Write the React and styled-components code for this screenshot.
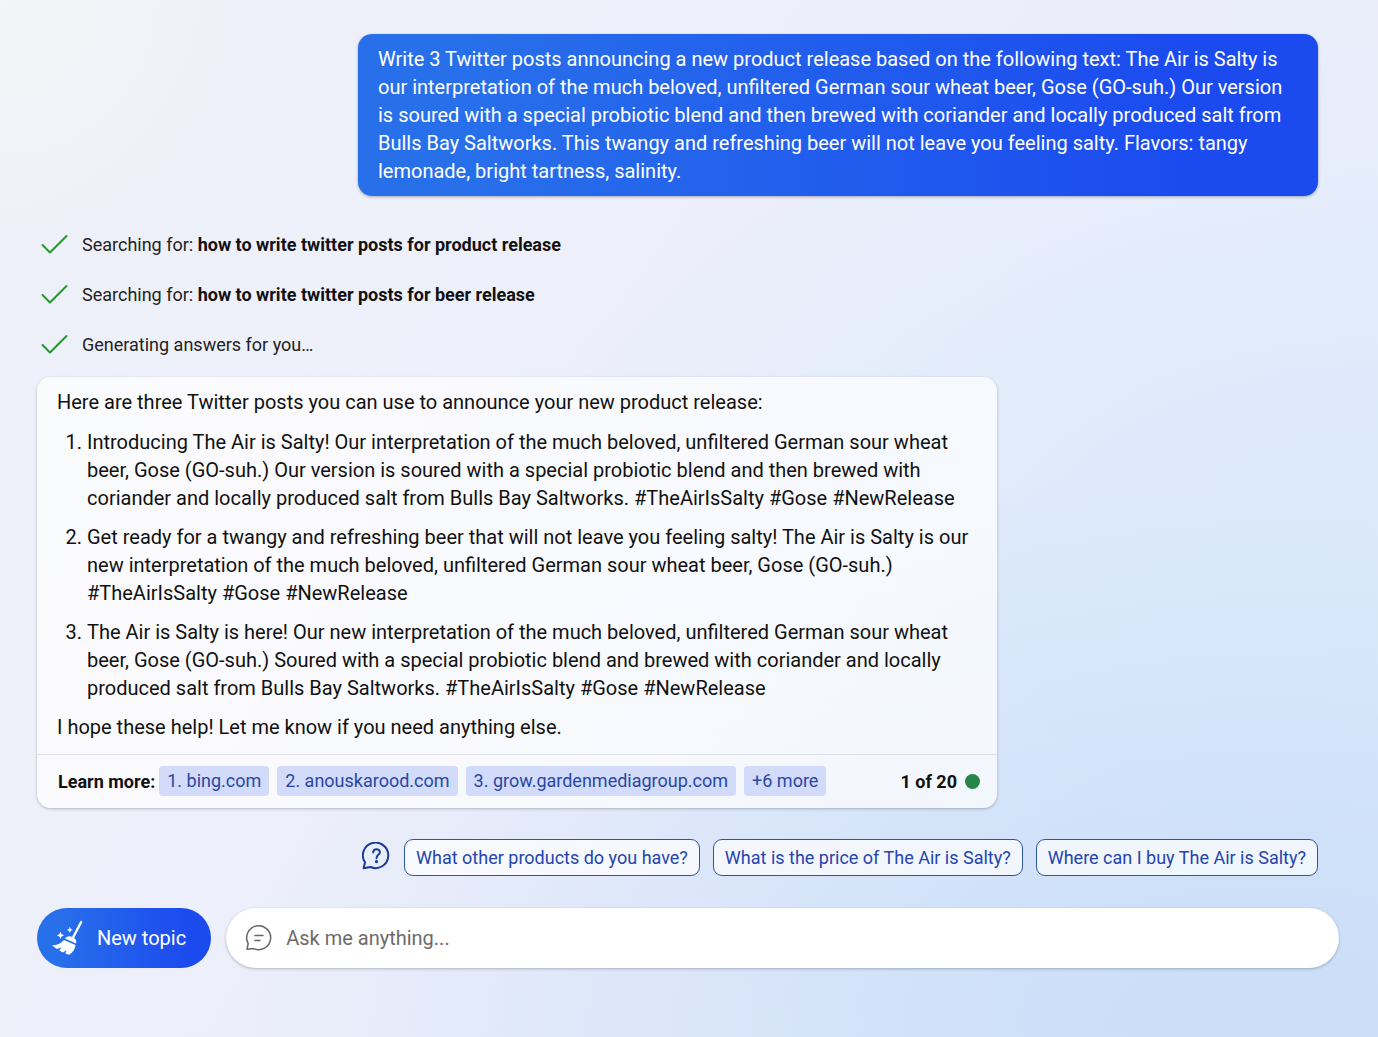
import React, { useState } from 'react'
import styled, { createGlobalStyle } from 'styled-components'

const GlobalStyle = createGlobalStyle`
  * {
    box-sizing: border-box;
  }
  body {
    margin: 0;
    font-family: Roboto, "Liberation Sans", sans-serif;
    color: #111;
  }
  button, input {
    font-family: inherit;
  }
`;

const Page = styled.div`
  min-height: 100vh;
  padding: 34px 39px 40px 37px;
  background:
    radial-gradient(circle at 0% 0%, #f3f5f7 0%, rgba(243, 245, 247, 0) 14%),
    radial-gradient(ellipse 75% 55% at 92% 100%, #cadef8 0%, rgba(202, 222, 248, 0.85) 25%, rgba(202, 222, 248, 0) 100%),
    radial-gradient(ellipse 65% 55% at 100% 58%, #ddeafb 0%, rgba(221, 234, 251, 0.9) 40%, rgba(221, 234, 251, 0) 100%),
    linear-gradient(120deg, #eff1f9 0%, #edeffa 35%, #e8ecfa 100%);
`;

const Thread = styled.main`
  display: flex;
  flex-direction: column;
  padding-right: 21px;
`;

const UserMessage = styled.div`
  align-self: flex-end;
  max-width: 960px;
  padding: 11px 20px;
  border-radius: 14px;
  background: linear-gradient(90deg, #2870ea 10%, #1b4aef 88%);
  color: white;
  font-size: 20px;
  line-height: 28px;
  box-shadow: 0 1px 3px rgba(0, 0, 0, 0.3);
`;

const StatusList = styled.ul`
  list-style: none;
  margin: 23px 0 8px;
  padding: 0 0 0 4px;
`;

const Status = styled.li`
  display: flex;
  align-items: center;
  gap: 14px;
  height: 50px;
  font-size: 18px;
  color: #222;
  b {
    color: #111;
  }
`;

const Answer = styled.article`
  width: 100%;
  max-width: 960px;
  border-radius: 14px;
  background-color: rgba(255, 255, 255, 0.7);
  box-shadow: 0 1px 3px rgba(0, 0, 0, 0.25);
`;

const AnswerBody = styled.div`
  padding: 11px 20px 13px;
  font-size: 20px;
  line-height: 28px;
  p {
    margin: 0;
  }
  ol {
    margin: 12px 0 11px;
    padding-left: 30px;
  }
  li + li {
    margin-top: 11px;
  }
`;

const AnswerFooter = styled.footer`
  display: flex;
  align-items: center;
  flex-wrap: wrap;
  gap: 8px;
  padding: 11px 17px 12px 21px;
  border-top: 1px solid #dfe1ea;
  font-size: 18px;
`;

const Label = styled.span`
  font-weight: 700;
  margin-right: -4px;
`;

const Source = styled.a`
  padding: 0 8px;
  border-radius: 4px;
  background-color: #d2dbf9;
  color: #2a47a5;
  line-height: 30px;
  text-decoration: none;
  &:hover{
    text-decoration: underline;
  }
`;

const Counter = styled.span`
  display: flex;
  align-items: center;
  gap: 8px;
  margin-left: auto;
  font-weight: 700;
  &::after {
    content: "";
    width: 15px;
    height: 15px;
    border-radius: 50%;
    background-color: #27854a;
  }
`;

const Suggestions = styled.div`
  display: flex;
  align-items: center;
  justify-content: flex-end;
  flex-wrap: wrap;
  gap: 13px;
  margin-top: 31px;
`;

const Suggestion = styled.button`
  height: 37px;
  padding: 0 11px;
  border: 1px solid #2b56a8;
  border-radius: 9px;
  background-color: rgba(255, 255, 255, 0.7);
  color: #2444ae;
  font-size: 18px;
  cursor: pointer;
`;

const Composer = styled.form`
  display: flex;
  align-items: center;
  gap: 15px;
  margin-top: 32px;
`;

const NewTopic = styled.button`
  display: flex;
  align-items: center;
  gap: 13px;
  height: 60px;
  padding: 0 25px 0 14px;
  border: none;
  border-radius: 30px;
  background: linear-gradient(90deg, #2870ea 10%, #1b4aef 88%);
  color: white;
  font-size: 20px;
  white-space: nowrap;
  cursor: pointer;
`;

const InputBar = styled.label`
  flex: 1;
  display: flex;
  align-items: center;
  gap: 13px;
  height: 60px;
  padding: 0 24px 0 19px;
  border-radius: 30px;
  background-color: white;
  color: #666;
  box-shadow: 0 1px 3px rgba(0, 0, 0, 0.25);
`;

const Input = styled.input`
  flex: 1;
  min-width: 0;
  padding: 0;
  border: none;
  outline: none;
  background: none;
  color: #111;
  font-size: 20px;
  &::placeholder {
    color: #6b6b6b;
    opacity: 1;
  }
`;

const CheckIcon = () => (
    <svg width="27" height="20" viewBox="0 0 27 20" fill="none" stroke="#219a2b" strokeWidth="2" aria-hidden="true">
        <path d="M1.5 11L9 18.5L25.5 2" strokeLinecap="round" strokeLinejoin="round" />
    </svg>
)

const QuestionIcon = () => (
    <svg width="29" height="32" viewBox="0 0 29 32" fill="none" stroke="#1c3c94" strokeWidth="2" strokeLinecap="round" strokeLinejoin="round" aria-hidden="true">
        <path d="M1.6 26.2L3 20.4A12.7 12.7 0 1 1 8.5 25L1.6 26.2Z" />
        <path d="M11.2 10.4C11.2 6.1 17.9 6.2 17.9 10.2C17.9 12.8 14.5 13 14.5 16.2" />
        <circle cx="14.5" cy="19.6" r="0.7" fill="#1c3c94" />
    </svg>
)

const ChatIcon = () => (
    <svg width="28" height="28" viewBox="0 0 28 28" fill="none" stroke="currentColor" strokeWidth="1.5" strokeLinecap="round" strokeLinejoin="round" aria-hidden="true">
        <path d="M2 25.2L3.2 19.6A12 12 0 1 1 8.6 24.6L2 25.2Z" />
        <path d="M10 11.5H18M10 16.5H15" />
    </svg>
)

const BroomIcon = () => (
    <svg width="33" height="36" viewBox="0 0 33 36" fill="white" aria-hidden="true">
        <path d="M30.2 2L21.5 18.5" stroke="white" strokeWidth="2.4" strokeLinecap="round" />
        <path d="M14 18.4C15.8 15.8 19 15.6 21.6 17C24.6 18.6 26 20.7 25 23.4Z" />
        <path d="M13 19.9L24.5 24.9C24.2 28.8 22 32.3 18.2 34.8L14.4 33.5L15.5 30.2L11.8 32.5L8.3 30.6L10.6 27.2L6 29L1 25.4C6 25 10 23.4 13 19.9Z" />
        <path d="M9.5 11.6L10.6 14.2L13.2 15.3L10.6 16.4L9.5 19L8.4 16.4L5.8 15.3L8.4 14.2Z" />
        <path d="M18.8 6.8L19.7 9L21.9 9.9L19.7 10.8L18.8 13L17.9 10.8L15.7 9.9L17.9 9Z" />
    </svg>
)

const searches = [
    'how to write twitter posts for product release',
    'how to write twitter posts for beer release',
]

const posts = [
    'Introducing The Air is Salty! Our interpretation of the much beloved, unfiltered German sour wheat beer, Gose (GO-suh.) Our version is soured with a special probiotic blend and then brewed with coriander and locally produced salt from Bulls Bay Saltworks. #TheAirIsSalty #Gose #NewRelease',
    'Get ready for a twangy and refreshing beer that will not leave you feeling salty! The Air is Salty is our new interpretation of the much beloved, unfiltered German sour wheat beer, Gose (GO-suh.) #TheAirIsSalty #Gose #NewRelease',
    'The Air is Salty is here! Our new interpretation of the much beloved, unfiltered German sour wheat beer, Gose (GO-suh.) Soured with a special probiotic blend and brewed with coriander and locally produced salt from Bulls Bay Saltworks. #TheAirIsSalty #Gose #NewRelease',
]

const sources = ['1. bing.com', '2. anouskarood.com', '3. grow.gardenmediagroup.com', '+6 more']

const suggestions = [
    'What other products do you have?',
    'What is the price of The Air is Salty?',
    'Where can I buy The Air is Salty?',
]

const App = () => {
    const [text, setText] = useState('');
    return (
        <Page>
            <GlobalStyle />
            <Thread>
                <UserMessage>
                    Write 3 Twitter posts announcing a new product release based on the following text: The Air is Salty is our interpretation of the much beloved, unfiltered German sour wheat beer, Gose (GO-suh.) Our version is soured with a special probiotic blend and then brewed with coriander and locally produced salt from Bulls Bay Saltworks. This twangy and refreshing beer will not leave you feeling salty. Flavors: tangy lemonade, bright tartness, salinity.
                </UserMessage>
                <StatusList>
                    {searches.map((query) => (
                        <Status key={query}>
                            <CheckIcon />
                            <span>Searching for: <b>{query}</b></span>
                        </Status>
                    ))}
                    <Status>
                        <CheckIcon />
                        <span>Generating answers for you…</span>
                    </Status>
                </StatusList>
                <Answer>
                    <AnswerBody>
                        <p>Here are three Twitter posts you can use to announce your new product release:</p>
                        <ol>
                            {posts.map((post) => <li key={post}>{post}</li>)}
                        </ol>
                        <p>I hope these help! Let me know if you need anything else.</p>
                    </AnswerBody>
                    <AnswerFooter>
                        <Label>Learn more:</Label>
                        {sources.map((source) => (
                            <Source href="#" key={source}>{source}</Source>
                        ))}
                        <Counter>1 of 20</Counter>
                    </AnswerFooter>
                </Answer>
                <Suggestions>
                    <QuestionIcon />
                    {suggestions.map((item) => (
                        <Suggestion type="button" key={item} onClick={() => setText(item)}>{item}</Suggestion>
                    ))}
                </Suggestions>
            </Thread>
            <Composer onSubmit={(e) => e.preventDefault()}>
                <NewTopic type="button" onClick={() => setText('')}>
                    <BroomIcon />
                    New topic
                </NewTopic>
                <InputBar>
                    <ChatIcon />
                    <Input
                        aria-label="Ask me anything"
                        placeholder="Ask me anything..."
                        value={text}
                        onChange={(e) => setText(e.target.value)}
                    />
                </InputBar>
            </Composer>
        </Page>
    )
}

export default App
